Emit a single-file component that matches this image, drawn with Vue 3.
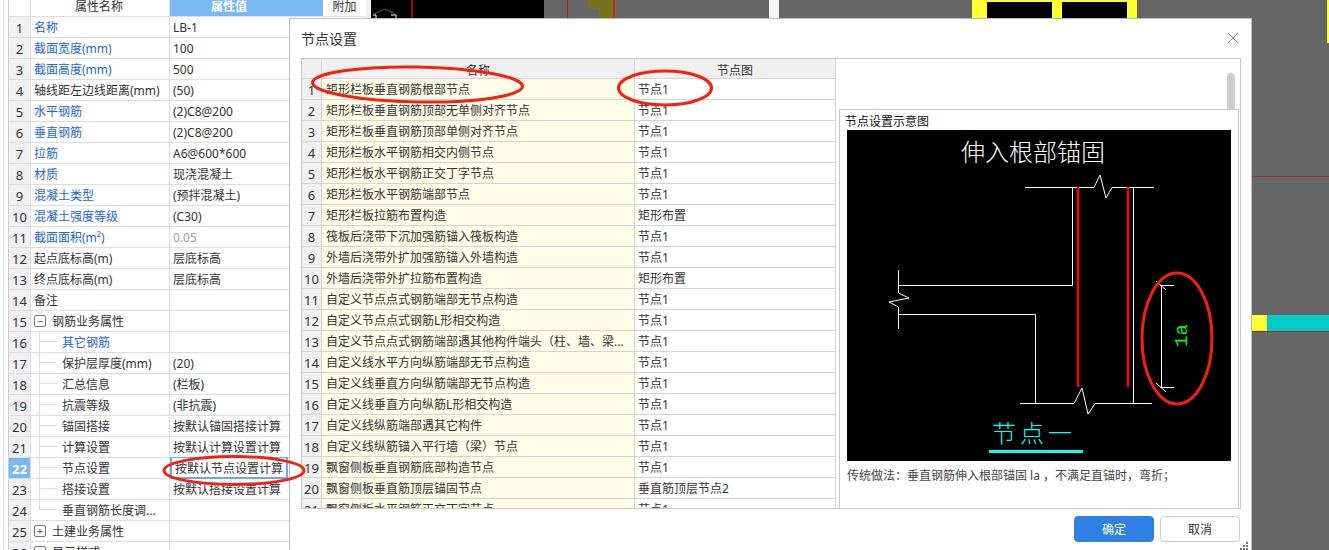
<script setup>
const props = [
  { name: '名称', value: 'LB-1', blue: true },
  { name: '截面宽度(mm)', value: '100', blue: true },
  { name: '截面高度(mm)', value: '500', blue: true },
  { name: '轴线距左边线距离(mm)', value: '(50)' },
  { name: '水平钢筋', value: '(2)C8@200', blue: true },
  { name: '垂直钢筋', value: '(2)C8@200', blue: true },
  { name: '拉筋', value: 'A6@600*600', blue: true },
  { name: '材质', value: '现浇混凝土', blue: true },
  { name: '混凝土类型', value: '(预拌混凝土)', blue: true },
  { name: '混凝土强度等级', value: '(C30)', blue: true },
  { name: '截面面积(m²)', value: '0.05', blue: true, gray: true },
  { name: '起点底标高(m)', value: '层底标高' },
  { name: '终点底标高(m)', value: '层底标高' },
  { name: '备注', value: '' },
  { name: '钢筋业务属性', value: '', group: '−' },
  { name: '其它钢筋', value: '', blue: true, tree: true },
  { name: '保护层厚度(mm)', value: '(20)', tree: true },
  { name: '汇总信息', value: '(栏板)', tree: true },
  { name: '抗震等级', value: '(非抗震)', tree: true },
  { name: '锚固搭接', value: '按默认锚固搭接计算', tree: true },
  { name: '计算设置', value: '按默认计算设置计算', tree: true },
  { name: '节点设置', value: '按默认节点设置计算', tree: true, active: true },
  { name: '搭接设置', value: '按默认搭接设置计算', tree: true },
  { name: '垂直钢筋长度调...', value: '', tree: true, last: true },
  { name: '土建业务属性', value: '', group: '+' },
  { name: '显示样式', value: '', group: '+' }
]

const nodes = [
  ['矩形栏板垂直钢筋根部节点', '节点1'],
  ['矩形栏板垂直钢筋顶部无单侧对齐节点', '节点1'],
  ['矩形栏板垂直钢筋顶部单侧对齐节点', '节点1'],
  ['矩形栏板水平钢筋相交内侧节点', '节点1'],
  ['矩形栏板水平钢筋正交丁字节点', '节点1'],
  ['矩形栏板水平钢筋端部节点', '节点1'],
  ['矩形栏板拉筋布置构造', '矩形布置'],
  ['筏板后浇带下沉加强筋锚入筏板构造', '节点1'],
  ['外墙后浇带外扩加强筋锚入外墙构造', '节点1'],
  ['外墙后浇带外扩拉筋布置构造', '矩形布置'],
  ['自定义节点点式钢筋端部无节点构造', '节点1'],
  ['自定义节点点式钢筋L形相交构造', '节点1'],
  ['自定义节点点式钢筋端部遇其他构件端头（柱、墙、梁...', '节点1'],
  ['自定义线水平方向纵筋端部无节点构造', '节点1'],
  ['自定义线垂直方向纵筋端部无节点构造', '节点1'],
  ['自定义线垂直方向纵筋L形相交构造', '节点1'],
  ['自定义线纵筋端部遇其它构件', '节点1'],
  ['自定义线纵筋锚入平行墙（梁）节点', '节点1'],
  ['飘窗侧板垂直钢筋底部构造节点', '节点1'],
  ['飘窗侧板垂直筋顶层锚固节点', '垂直筋顶层节点2'],
  ['飘窗侧板水平钢筋正交丁字节点', '节点1']
]
</script>

<template>
  <div class="page">
    <!-- 属性列表 -->
    <div class="props">
      <div class="props-head">
        <div class="c-num"></div>
        <div class="c-name head-name">属性名称</div>
        <div class="c-value head-value">属性值</div>
        <div class="c-extra">附加</div>
      </div>
      <div v-for="(p, i) in props" :key="i" class="props-row">
        <div class="c-num" :class="{ 'num-active': p.active }">{{ i + 1 }}</div>
        <div class="c-name" :class="{ blue: p.blue, tree: p.tree, last: p.last, group: p.group }">
          <span v-if="p.group" class="toggle">{{ p.group }}</span>
          <span class="name-text">{{ p.name }}</span>
        </div>
        <div class="c-value" :class="{ gray: p.gray, 'value-active': p.active }">{{ p.value }}</div>
        <div class="c-extra"></div>
      </div>
    </div>

    <!-- CAD 画布 -->
    <div class="cad">
      <div class="cad-black"></div>
      <svg class="cad-arc" width="30" height="20" viewBox="0 0 30 20">
        <path d="M3 14 L14 9 L24 14" fill="none" stroke="#1b8a1b" />
        <path d="M2 15 H5 V20 M20 15 H25 V20" fill="none" stroke="#fff" />
      </svg>
      <div class="cad-red r1"></div>
      <div class="cad-red r2"></div>
      <div class="cad-olive o1"></div>
      <div class="cad-olive o2"></div>
      <div class="cad-red r3"></div>
      <div class="cad-white"></div>
      <div class="cad-yellow">
        <span></span>
        <span></span>
      </div>
      <div class="cad-corner"></div>
      <div class="cad-red-h"></div>
      <div class="cad-band"></div>
      <div class="cad-red-h2"></div>
    </div>

    <!-- 节点设置弹窗 -->
    <div class="dialog">
      <div class="dialog-title">
        <span>节点设置</span>
        <svg class="close" width="12" height="12" viewBox="0 0 12 12">
          <path d="M1 1 L11 11 M11 1 L1 11" stroke="#888" fill="none" />
        </svg>
      </div>
      <div class="dialog-body">
        <div class="nodes">
          <div class="nodes-head">
            <div class="n-num"></div>
            <div class="n-name n-center">名称</div>
            <div class="n-value n-center">节点图</div>
          </div>
          <div v-for="(n, i) in nodes" :key="i" class="nodes-row">
            <div class="n-num">{{ i + 1 }}</div>
            <div class="n-name n-yellow">{{ n[0] }}</div>
            <div class="n-value">{{ n[1] }}</div>
          </div>
        </div>
        <div class="preview">
          <div class="scroll-thumb"></div>
          <div class="preview-inner">
            <div class="preview-title">节点设置示意图</div>
            <svg class="drawing" width="384" height="331" viewBox="847 130 384 331">
              <rect x="847" y="130" width="384" height="331" fill="#000" />
              <text x="961" y="161" class="draw-title" fill="#fff">伸入根部锚固</text>
              <g fill="none" stroke="#fff" stroke-width="1">
                <path d="M1025 187.5 H1094 L1100 175 L1106 198 L1112 187.5 H1154" />
                <path d="M1072.5 187 V285.5 H898.5" />
                <path d="M1133.5 187 V403" />
                <path d="M898.5 270 V293 L909 298 L889 302 L898.5 307 V329" />
                <path d="M898 314.5 H1035.5 V403" />
                <path d="M1020 403.5 H1074 L1082 388 L1088 414 L1095 403.5 H1152" />
                <path d="M1160 285.5 H1174 M1160 387.5 H1174 M1161.5 285 V388" />
                <path d="M1156 281 L1166 290 M1156 383 L1166 392" />
              </g>
              <path d="M1078 187 V387 M1128 187 V387" stroke="#f00" stroke-width="2.5" fill="none" />
              <text x="1187" y="347" class="draw-la" fill="#0f0" transform="rotate(-90 1187 347)">1a</text>
              <text x="992" y="442" class="draw-node" fill="#0ff">节点一</text>
              <rect x="989" y="450" width="94" height="3" fill="#0ff" />
            </svg>
            <div class="preview-caption">传统做法：垂直钢筋伸入根部锚固 la ，不满足直锚时，弯折；</div>
          </div>
        </div>
      </div>
      <div class="dialog-foot">
        <button class="btn btn-primary">确定</button>
        <button class="btn">取消</button>
      </div>
      <svg class="grip" width="9" height="9" viewBox="0 0 9 9">
        <path d="M6 0h2v2H6zM3 3h2v2H3zM6 3h2v2H6zM0 6h2v2H0zM3 6h2v2H3zM6 6h2v2H6z" fill="#777" />
      </svg>
    </div>

    <!-- 红色圈注 -->
    <svg class="marks" width="1329" height="550" viewBox="0 0 1329 550">
      <g fill="none" stroke="#f5200f" stroke-width="3">
        <ellipse cx="417.5" cy="84.5" rx="105" ry="17.5" transform="rotate(1 417.5 84.5)" />
        <ellipse cx="665" cy="88" rx="46.5" ry="17" />
        <ellipse cx="234" cy="470.5" rx="70" ry="14" />
        <ellipse cx="1177" cy="338.5" rx="35" ry="65.5" />
      </g>
    </svg>
  </div>
</template>

<style>
body {
  margin: 0;
  overflow: hidden;
}
</style>

<style scoped>
.page {
  position: relative;
  display: flex;
  width: 1329px;
  height: 550px;
  overflow: hidden;
  background: #666;
  font-family: "Noto Sans", "Noto Sans CJK SC", sans-serif;
  font-size: 12px;
  color: #333;
}

/* 属性列表 */
.props {
  width: 371px;
  flex: none;
  box-sizing: border-box;
  padding-left: 8px;
  background: #fff;
  border-right: 5px solid #f0f0f0;
  position: relative;
}

.props::before {
  content: "";
  position: absolute;
  left: 3px;
  top: 0;
  bottom: 0;
  width: 1px;
  background: #ddd;
}

.props-head,
.props-row {
  display: flex;
  height: 21px;
  box-sizing: border-box;
  border-left: 1px solid #ccc;
  border-bottom: 1px solid #ddd;
  line-height: 22px;
}

.props-head {
  height: 17px;
  line-height: 14px;
}

.c-num {
  width: 22px;
  flex: none;
  box-sizing: border-box;
  text-align: center;
  background: #f0f0f0;
  border-right: 1px solid #ddd;
  font-size: 13px;
}

.props-head .c-num {
  background: #fff;
}

.num-active {
  background: #7ab8f5;
  color: #fff;
  font-weight: 700;
}

.c-name {
  width: 139px;
  flex: none;
  box-sizing: border-box;
  padding-left: 3px;
  border-right: 1px solid #ddd;
  white-space: nowrap;
  position: relative;
}

.head-name {
  text-align: center;
  padding: 0 2px 0 0;
}

.c-value {
  width: 154px;
  flex: none;
  box-sizing: border-box;
  padding-left: 3px;
  border-right: 1px solid #ddd;
  white-space: nowrap;
  position: relative;
}

.head-value {
  background: #7ab8f5;
  color: #fff;
  text-align: center;
  padding: 0 35px 0 0;
  font-weight: 700;
  border-right: 1px solid #fff;
}

.c-extra {
  width: 41px;
  flex: none;
  text-align: center;
}

.blue {
  color: #2563e0;
}

.gray {
  color: #a0a0a0;
}

.group {
  padding-left: 3px;
  display: flex;
  align-items: center;
}

.group .name-text {
  margin-top: 2px;
}

.toggle {
  width: 12px;
  height: 12px;
  box-sizing: border-box;
  flex: none;
  border: 1px solid #777;
  border-radius: 2px;
  margin-right: 6px;
  font-size: 11px;
  line-height: 9px;
  text-align: center;
  color: #555;
}

.tree {
  padding-left: 31px;
}

.tree::before {
  content: "";
  position: absolute;
  left: 8px;
  top: -1px;
  bottom: -1px;
  width: 1px;
  background: #ddd;
}

.tree.last::before {
  bottom: 10px;
}

.tree::after {
  content: "";
  position: absolute;
  left: 9px;
  top: 9px;
  width: 17px;
  height: 1px;
  background: #ddd;
}

.value-active::after {
  content: "";
  position: absolute;
  left: 0;
  top: -1px;
  right: 35px;
  bottom: -1px;
  border: 2px solid #6aa8ea;
  border-top-width: 1px;
}

.value-active {
  padding-left: 5px;
}

/* CAD 画布 */
.cad {
  flex: 1;
  position: relative;
}

.cad > div,
.cad > svg {
  position: absolute;
}

.cad-black {
  left: 0;
  top: 0;
  width: 173px;
  height: 18px;
  background: #000;
}

.cad-arc {
  left: 0;
  top: 0;
}

.cad-red {
  top: 0;
  height: 18px;
  width: 2px;
  background: #8f0c0c;
}

.r1 {
  left: 40px;
}

.r2 {
  left: 196px;
  width: 1px;
  background: #c01818;
}

.r3 {
  left: 242px;
  background: #c92a10;
}

.cad-olive {
  background: #77731a;
}

.o1 {
  left: 217px;
  top: 0;
  width: 25px;
  height: 9px;
}

.o2 {
  left: 228px;
  top: 9px;
  width: 14px;
  height: 9px;
}

.cad-white {
  left: 398px;
  top: 0;
  width: 10px;
  height: 18px;
  background: #f5f5f5;
}

.cad-yellow {
  left: 601px;
  top: 0;
  width: 165px;
  height: 18px;
  background: #ffff33;
  box-sizing: border-box;
  padding: 2px 10px 0 15px;
  display: flex;
  gap: 10px;
}

.cad-yellow span {
  width: 65px;
  background: #000;
}

.cad-corner {
  left: 956px;
  top: 0;
  width: 2px;
  height: 43px;
  background: #ffff33;
}

.cad-red-h {
  left: 881px;
  top: 176px;
  right: 0;
  height: 1px;
  background: #b52222;
}

.cad-band {
  left: 881px;
  top: 315px;
  right: 0;
  height: 16px;
  background: linear-gradient(90deg, #ffff33 15px, #00cccc 15px);
}

.cad-red-h2 {
  left: 881px;
  top: 331px;
  right: 0;
  height: 1px;
  background: #b52222;
}

/* 弹窗 */
.dialog {
  position: absolute;
  left: 289px;
  top: 18px;
  width: 963px;
  height: 540px;
  box-sizing: border-box;
  background: #fff;
  border: 1px solid #bbb;
  padding: 0 11px;
}

.dialog-title {
  height: 39px;
  box-sizing: border-box;
  padding: 0 1px 2px 0;
  display: flex;
  align-items: center;
  justify-content: space-between;
  font-size: 14px;
  color: #333;
}

.dialog-body {
  display: flex;
  width: 939px;
  height: 451px;
}

.nodes {
  width: 535px;
  flex: none;
  box-sizing: border-box;
  border: 1px solid #c8c8c8;
  border-right: 0;
  overflow: hidden;
}

.nodes-head,
.nodes-row {
  display: flex;
  height: 21px;
  box-sizing: border-box;
  border-bottom: 1px solid #d4d4d4;
  line-height: 22px;
}

.nodes-head {
  height: 20px;
  line-height: 23px;
  background: #f0f0f0;
}

.n-num {
  width: 20px;
  flex: none;
  box-sizing: border-box;
  background: #f0f0f0;
  border-right: 1px solid #d4d4d4;
  text-align: center;
  font-size: 13px;
}

.n-name {
  width: 313px;
  flex: none;
  box-sizing: border-box;
  padding-left: 4px;
  border-right: 1px solid #d4d4d4;
  white-space: nowrap;
  overflow: hidden;
}

.n-yellow {
  background: #fffde8;
}

.n-value {
  flex: 1;
  box-sizing: border-box;
  padding-left: 3px;
  border-right: 1px solid #d4d4d4;
}

.n-center {
  text-align: center;
  padding-left: 0;
}

.preview {
  flex: 1;
  box-sizing: border-box;
  position: relative;
  border: 1px solid #c8c8c8;
  border-left: 0;
  padding: 50px 1px 0 3px;
  display: flex;
}

.scroll-thumb {
  position: absolute;
  left: 391px;
  top: 14px;
  width: 8px;
  height: 36px;
  background: #ccc;
  border-radius: 4px 4px 0 0;
}

.preview-inner {
  flex: 1;
  box-sizing: border-box;
  border: 1px solid #c8c8c8;
  border-bottom: 0;
  padding: 4px 7px 0;
  color: #222;
  overflow: hidden;
}

.preview-title {
  height: 16px;
  line-height: 16px;
  font-size: 12px;
  color: #111;
  margin-left: -2px;
}

.drawing {
  display: block;
}

.draw-title {
  font-size: 24px;
  font-family: "Noto Sans CJK SC", sans-serif;
  font-weight: 300;
}

.draw-la {
  font-size: 19px;
  font-family: "Liberation Mono", monospace;
}

.draw-node {
  font-size: 24px;
  letter-spacing: 4px;
  font-family: "Noto Sans CJK SC", sans-serif;
  font-weight: 300;
}

.preview-caption {
  margin-top: 7px;
  line-height: 16px;
  color: #444;
  white-space: nowrap;
}

.dialog-foot {
  display: flex;
  justify-content: flex-end;
  gap: 6px;
  width: 939px;
  margin-top: 7px;
}

.btn {
  width: 80px;
  height: 26px;
  box-sizing: border-box;
  border: 1px solid #ccc;
  border-radius: 4px;
  background: #fff;
  color: #333;
  font: inherit;
  padding: 0;
}

.btn-primary {
  background: #2f80e4;
  border-color: #2f80e4;
  color: #fff;
}

.grip {
  position: absolute;
  left: 950px;
  top: 523px;
}

.marks {
  position: absolute;
  left: 0;
  top: 0;
  pointer-events: none;
}
</style>
